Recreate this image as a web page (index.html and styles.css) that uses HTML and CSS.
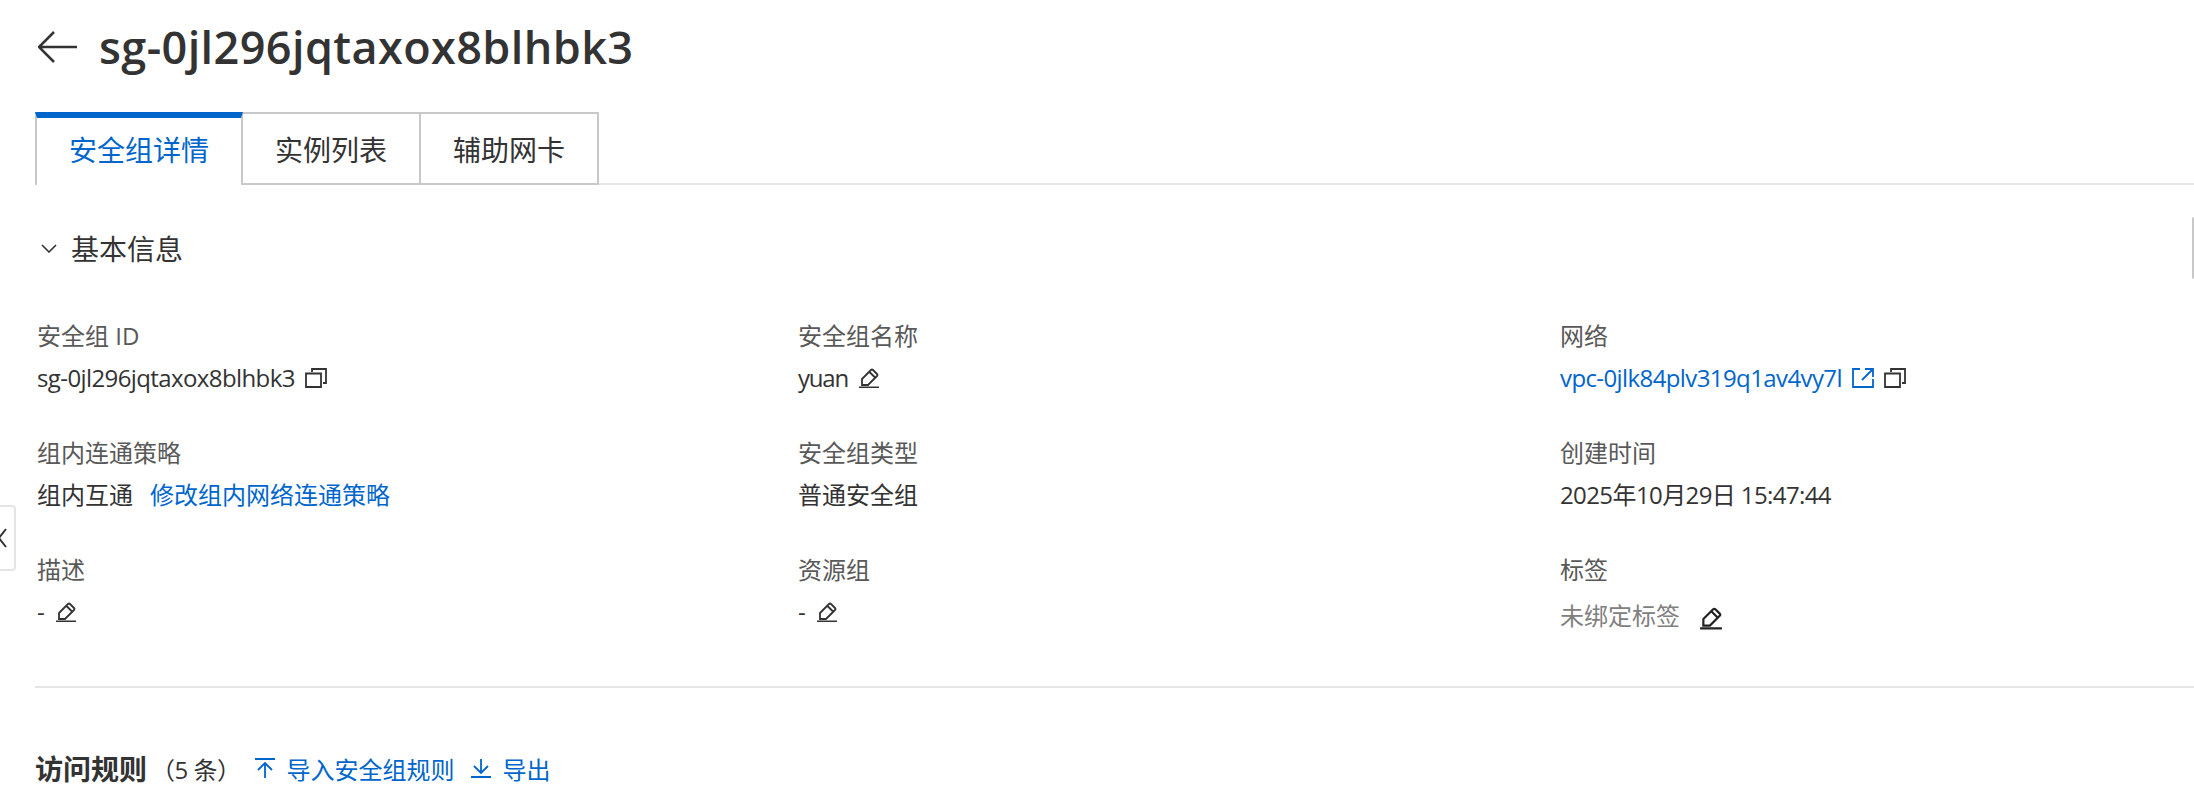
FILE: index.html
```html
<!DOCTYPE html>
<html lang="zh-CN">
<head>
    <meta charset="UTF-8">
    <title>安全组详情</title>
    <link rel="stylesheet" href="styles.css">
</head>
<body>
    <div class="page">
        <header class="title-bar">
            <svg class="back-icon" viewBox="0 0 40 32"><path d="M16 1 1 16l15 15M1 16h38"/></svg>
            <h1>sg-0jl296jqtaxox8blhbk3</h1>
        </header>

        <nav class="tabs">
            <a href="#" class="tab active">安全组详情</a>
            <a href="#" class="tab">实例列表</a>
            <a href="#" class="tab">辅助网卡</a>
        </nav>

        <section class="basic">
            <h2 class="section-title">
                <svg class="chevron" viewBox="0 0 16 9"><path d="M1 1l7 7 7-7"/></svg>
                基本信息
            </h2>

            <div class="info-grid">
                <div class="info-item">
                    <div class="label">安全组 ID</div>
                    <div class="value"><span class="latin">sg-0jl296jqtaxox8blhbk3</span>
                        <svg class="icon copy" viewBox="0 0 22 20"><path d="M7 4V1h14v14h-3"/><path d="M1 5.500h15v13.500H1z"/></svg>
                    </div>
                </div>
                <div class="info-item">
                    <div class="label">安全组名称</div>
                    <div class="value"><span class="latin short">yuan</span>
                        <svg class="icon edit" viewBox="0 0 22 20"><path d="M4 11 13 2q1-1 2 0l4 4q1 1 0 2l-9 9H4zM11.500 4l6 6M1 19.500h20"/></svg>
                    </div>
                </div>
                <div class="info-item">
                    <div class="label">网络</div>
                    <div class="value"><a href="#" class="link latin">vpc-0jlk84plv319q1av4vy7l</a>
                        <svg class="icon external" viewBox="0 0 22 20"><path d="M8 1H1v18h20v-8M13 1h8v8M21 1 10 12"/></svg>
                        <svg class="icon copy" viewBox="0 0 22 20"><path d="M7 4V1h14v14h-3"/><path d="M1 5.500h15v13.500H1z"/></svg>
                    </div>
                </div>

                <div class="info-item">
                    <div class="label">组内连通策略</div>
                    <div class="value">组内互通<a href="#" class="link policy-link">修改组内网络连通策略</a></div>
                </div>
                <div class="info-item">
                    <div class="label">安全组类型</div>
                    <div class="value">普通安全组</div>
                </div>
                <div class="info-item">
                    <div class="label">创建时间</div>
                    <div class="value"><span class="latin">2025年10月29日 15:47:44</span></div>
                </div>

                <div class="info-item">
                    <div class="label">描述</div>
                    <div class="value">-
                        <svg class="icon edit" viewBox="0 0 22 20"><path d="M4 11 13 2q1-1 2 0l4 4q1 1 0 2l-9 9H4zM11.500 4l6 6M1 19.500h20"/></svg>
                    </div>
                </div>
                <div class="info-item">
                    <div class="label">资源组</div>
                    <div class="value">-
                        <svg class="icon edit" viewBox="0 0 22 20"><path d="M4 11 13 2q1-1 2 0l4 4q1 1 0 2l-9 9H4zM11.500 4l6 6M1 19.500h20"/></svg>
                    </div>
                </div>
                <div class="info-item">
                    <div class="label">标签</div>
                    <div class="value muted tag-value">未绑定标签
                        <svg class="icon edit-large" viewBox="0 0 22 20"><path d="M4 11 13 2q1-1 2 0l4 4q1 1 0 2l-9 9H4zM11.500 4l6 6M1 19.500h20"/></svg>
                    </div>
                </div>
            </div>
        </section>

        <section class="rules">
            <h2 class="rules-title">访问规则</h2>
            <span class="rules-count">（5 条）</span>
            <a href="#" class="rule-action">
                <svg class="action-icon" viewBox="0 0 22 20"><path d="M1 1h20M11 5v15M4 12l7-7 7 7"/></svg>导入安全组规则
            </a>
            <a href="#" class="rule-action">
                <svg class="action-icon" viewBox="0 0 22 20"><path d="M1 19h20M11 1v14M4 8l7 7 7-7"/></svg>导出
            </a>
        </section>
    </div>

    <div class="side-handle">
        <svg viewBox="0 0 8 20"><path d="M7 1 0 10l7 9"/></svg>
    </div>
    <div class="right-handle"></div>
</body>
</html>
```

FILE: styles.css
```css
body {
    margin: 0;
    background-color: #fff;
    color: #333;
    font-family: "Open Sans", "Noto Sans CJK SC", sans-serif;
    font-size: 24px;
    overflow: hidden;
}
svg {
    fill: none;
    stroke: currentColor;
}
a {
    text-decoration: none;
}
.page {
    padding-left: 35px;
}
.title-bar {
    display: flex;
    align-items: center;
    height: 94px;
}
.back-icon {
    width: 40px;
    height: 32px;
    margin-left: 3px;
    stroke-width: 2.500;
}
h1 {
    margin: 0 0 0 21px;
    font-size: 45px;
    font-weight: 600;
    line-height: 94px;
    letter-spacing: 0.4px;
}
.tabs {
    display: flex;
    margin-top: 18px;
    height: 71px;
    border-bottom: 2px solid #e5e5e5;
}
.tab {
    display: flex;
    align-items: center;
    justify-content: center;
    box-sizing: border-box;
    height: 73px;
    padding: 0 32px;
    border: 2px solid #c8c8c8;
    border-left: 0;
    color: #333;
    font-size: 28px;
}
.tab.active {
    width: 208px;
    padding: 0 0 6px;
    border: 0;
    border-top: 6px solid #0066cc;
    border-left: 2px solid #c8c8c8;
    border-right: 2px solid #c8c8c8;
    color: #0066cc;
    background-color: #fff;
}
.section-title {
    display: flex;
    align-items: center;
    margin: 41px 0 0;
    height: 44px;
    font-size: 28px;
    font-weight: 400;
}
.chevron {
    width: 16px;
    height: 9px;
    margin: 0 14px 0 6px;
    stroke-width: 1.600;
}
.info-grid {
    display: grid;
    grid-template-columns: 761px 762px 1fr;
    grid-auto-rows: 117px;
    margin-top: 49px;
    padding-left: 2px;
}
.label {
    color: #595959;
    height: 34px;
    line-height: 34px;
}
.value {
    display: flex;
    align-items: center;
    gap: 10px;
    height: 34px;
    margin-top: 8px;
    line-height: 34px;
    white-space: nowrap;
}
.tag-value {
    margin-top: 12px;
}
.latin {
    letter-spacing: -0.6px;
}
.latin.short {
    letter-spacing: -1.2px;
}
.link {
    color: #0066cc;
}
.policy-link {
    margin-left: 7px;
}
.muted {
    color: #808080;
}
.icon {
    width: 22px;
    height: 20px;
    stroke-width: 1.800;
    color: #333;
}
.external {
    color: #0066cc;
}
.edit-large {
    width: 24px;
    height: 24px;
    margin-left: 9px;
    margin-top: 4px;
    stroke-width: 2;
    color: #222;
}
.rules {
    display: flex;
    align-items: center;
    margin-top: 16px;
    height: 44px;
    border-top: 2px solid #e5e5e5;
    padding-top: 58px;
}
.rules-title {
    margin: 0;
    font-size: 28px;
    font-weight: 700;
}
.rules-count {
    margin-left: 4px;
    letter-spacing: -0.5px;
}
.rule-action {
    display: flex;
    align-items: center;
    gap: 10px;
    margin-left: 14px;
    color: #0066cc;
}
.rule-action + .rule-action {
    margin-left: 16px;
}
.action-icon {
    width: 22px;
    height: 20px;
    stroke-width: 1.800;
}
.side-handle {
    position: absolute;
    left: 0;
    top: 505px;
    box-sizing: border-box;
    width: 16px;
    height: 66px;
    border: 2px solid #e5e5e5;
    border-left: 0;
    border-radius: 0 4px 4px 0;
    display: flex;
    align-items: center;
    overflow: hidden;
    background-color: #fff;
}
.side-handle svg {
    flex: none;
    width: 8px;
    height: 20px;
    margin-left: -1px;
    stroke-width: 2;
}
.right-handle {
    position: absolute;
    right: 0;
    top: 217px;
    box-sizing: border-box;
    width: 2px;
    height: 62px;
    border-left: 2px solid #c8c8c8;
    border-radius: 3px 0 0 3px;
}
```
